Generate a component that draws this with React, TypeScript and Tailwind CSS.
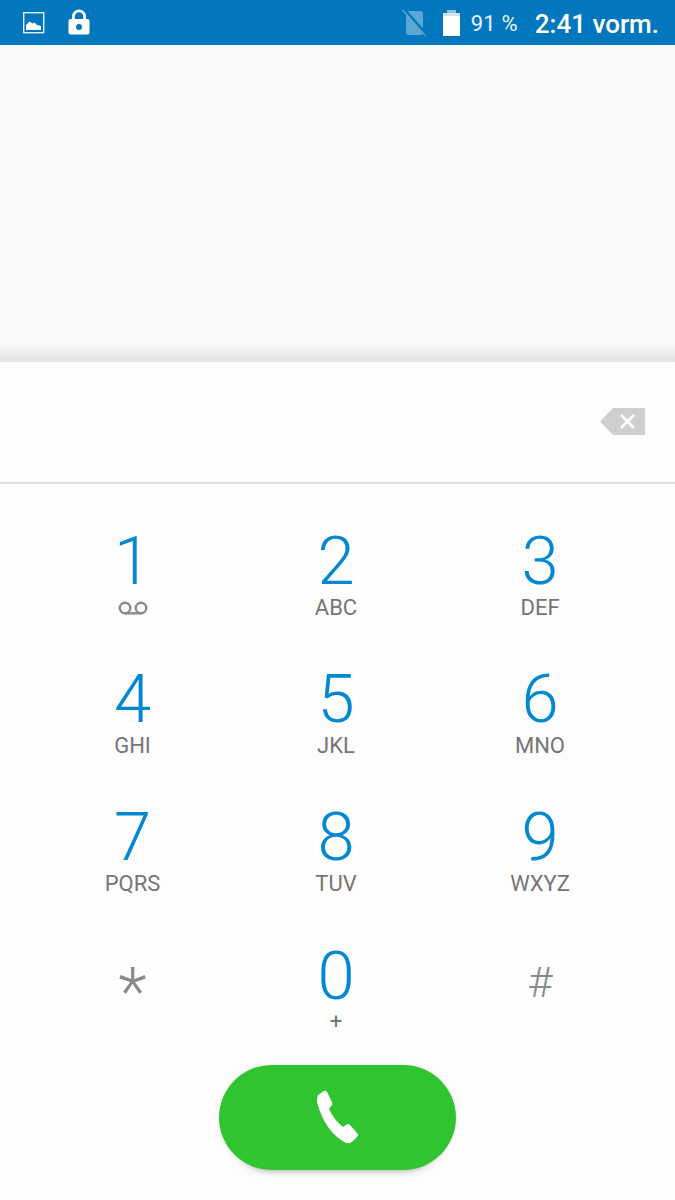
const keys = [
  { digit: "1", sub: "voicemail" },
  { digit: "2", sub: "ABC" },
  { digit: "3", sub: "DEF" },
  { digit: "4", sub: "GHI" },
  { digit: "5", sub: "JKL" },
  { digit: "6", sub: "MNO" },
  { digit: "7", sub: "PQRS" },
  { digit: "8", sub: "TUV" },
  { digit: "9", sub: "WXYZ" },
];

function Voicemail() {
  return (
    <svg width="32" height="14" viewBox="0 0 32 14" fill="none" stroke="#8a8a8a" strokeWidth="2.4">
      <circle cx="8" cy="7" r="5.3" />
      <circle cx="24" cy="7" r="5.3" />
      <path d="M8 12.3h16" />
    </svg>
  );
}

function StatusBar() {
  return (
    <div className="h-[45px] bg-[#0277bd] flex items-center pl-[22px] pr-[16px] text-white">
      <svg width="23" height="24" viewBox="0 0 23 24" className="mr-[22px]">
        <rect x="1.700" y="1.700" width="20" height="20" fill="none" stroke="#e3f0f8" strokeWidth="1.400" />
        <path d="M4 19v-5l3.500-3.500 3 2 2-1 2.500 2.500 2.500.5L19 15.500V19z" fill="#fff" />
      </svg>
      <svg width="24" height="28" viewBox="0 0 24 28" className="-mt-[1px]">
        <path
          fillRule="evenodd"
          d="M12 1.500a7 7 0 0 0-7 7V11H3.500A2 2 0 0 0 1.500 13v11.500a2 2 0 0 0 2 2h17a2 2 0 0 0 2-2V13a2 2 0 0 0-2-2H19V8.500a7 7 0 0 0-7-7zM7.800 11V8.500a4.200 4.200 0 0 1 8.400 0V11zM12 16a3 3 0 1 1 0 6 3 3 0 0 1 0-6z"
          fill="#fff"
        />
      </svg>
      <div className="flex-1" />
      <svg width="26" height="28" viewBox="0 0 26 28" className="mr-[14px]">
        <path d="M4 5q0-3 3-3h11q3 0 3 3v18q0 3-3 3H7q-3 0-3-3z" fill="#5aa7d6" />
        <path d="M2 0l24 27" stroke="#0277bd" strokeWidth="2.500" />
        <path d="M0.500 1l23 26" stroke="#5aa7d6" strokeWidth="1.300" />
      </svg>
      <svg width="19" height="28" viewBox="0 0 19 28" className="mr-[10px]">
        <path d="M5 1h9v3H5z" fill="#8fc3e4" />
        <path d="M1 4h17v3H1z" fill="#cfe4f2" />
        <path d="M1 7h17v20H1z" fill="#fff" />
      </svg>
      <span className="text-[22px] font-normal text-[#e8f3fa] mr-[17px] tracking-[0.2px] mt-[2px]">91 %</span>
      <span className="text-[26px] font-medium mt-[3px]">2:41 vorm.</span>
    </div>
  );
}

export default function App() {
  return (
    <div
      className="w-[675px] h-[1200px] overflow-hidden bg-[#fdfdfd] flex flex-col antialiased"
      style={{ fontFamily: "Roboto, sans-serif" }}
    >
      <StatusBar />

      {/* Contact list area */}
      <div className="h-[317px] bg-gradient-to-b from-[#fafafa] from-[94%] to-[#e4e4e4]" />

      {/* Number field */}
      <div className="h-[122px] border-b-2 border-[#e0e0e0] flex items-center justify-end pr-[30px]">
        <svg width="45" height="27" viewBox="0 0 45 27" className="-mt-[1px]">
          <path d="M13 0h32v27H13L0 13.500z" fill="#cfcfcf" />
          <path d="M21 7l13 13M34 7L21 20" stroke="#fff" strokeWidth="2.500" />
        </svg>
      </div>

      {/* Keypad */}
      <div className="grid grid-cols-[203px_204px_204px] pl-[31px] pt-[41px]">
        {keys.map((k) => (
          <div key={k.digit} className="h-[138px] flex flex-col items-center">
            <span className="h-[72px] leading-[72px] text-[67px] font-light text-[#0288d1]">{k.digit}</span>
            {k.sub === "voicemail" ? (
              <span className="h-[22px] flex items-center"><Voicemail /></span>
            ) : (
              <span className="h-[22px] leading-[22px] text-[22px] text-[#757575]">{k.sub}</span>
            )}
          </div>
        ))}

        <div className="h-[126px] pt-[3px] flex flex-col items-center">
          <span className="h-[78px] leading-[102px] text-[66px] font-light text-[#8a8a8a]">*</span>
        </div>
        <div className="h-[126px] pt-[3px] flex flex-col items-center">
          <span className="h-[69px] leading-[69px] text-[67px] font-light text-[#0288d1]">0</span>
          <span className="h-[22px] leading-[22px] text-[22px] text-[#757575]">+</span>
        </div>
        <div className="h-[126px] pt-[3px] flex flex-col items-center">
          <span className="h-[78px] leading-[80px] text-[43px] font-light text-[#8a8a8a]">#</span>
        </div>
      </div>

      {/* Call button */}
      <button className="w-[237px] h-[105px] self-center rounded-full bg-[#30c530] flex items-center justify-center shadow-[0_14px_10px_-14px_rgba(0,0,0,0.35),0_0_4px_rgba(0,0,0,0.08)]">
        <svg width="42" height="55" viewBox="0 0 42 55">
          <path
            d="M1 5L7 1Q9 0 10 2L15 12Q16 15 14 16L12 19Q17 30 26 37L29 35Q31 33 33 35L40 43Q42 45 40 47L36 51Q33 54 29 53Q8 42 0 12Q0 7 1 5z"
            fill="#fff"
          />
        </svg>
      </button>
    </div>
  );
}
